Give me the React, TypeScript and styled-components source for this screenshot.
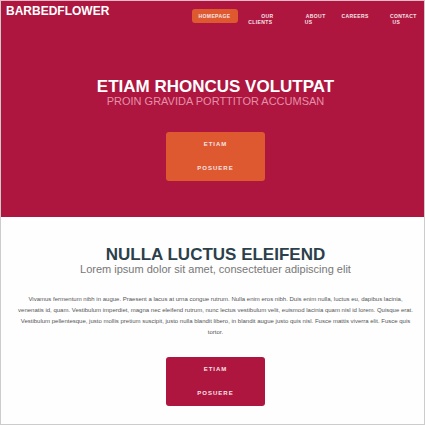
import React from "react";
import styled, { createGlobalStyle } from "styled-components";

const crimson = "#ae163f";
const orange = "#de592f";

const GlobalStyle = createGlobalStyle`
  * { box-sizing: border-box; }
  body {
    margin: 0;
    background: #fefefe;
    color: #555;
    font-family: "Liberation Sans", Arial, Helvetica, sans-serif;
  }
`;

const Page = styled.div`
  display: flex;
  flex-direction: column;
  min-height: 100vh;
  border: 1px solid #ccc;
  border-top-color: #f0b9c8;
`;

const Hero = styled.div`
  padding-bottom: 36px;
  background: ${crimson};
`;

const Header = styled.header`
  display: flex;
  justify-content: space-between;
  align-items: flex-start;
  height: 77px;
`;

const Logo = styled.a`
  padding: 3px 0 0 5px;
  color: #fff;
  font-size: 12px;
  line-height: 15px;
  font-weight: 700;
  text-decoration: none;
`;

const Nav = styled.nav`
  width: 55%;
`;

const Menu = styled.ul`
  display: grid;
  grid-template-columns: 46fr 52fr 44fr 41fr 48fr;
  justify-items: center;
  margin: 0;
  padding: 12px 0 0;
  list-style: none;
`;

const MenuItem = styled.li`
  width: min-content;
  text-align: center;
  font-size: 5px;
  line-height: 6px;
`;

const MenuLink = styled.a<{ $active?: boolean }>`
  padding: 4px 7px;
  border-radius: 3px;
  background: ${(p) => (p.$active ? orange : "transparent")};
  color: #f8e4e8;
  font-weight: 700;
  letter-spacing: 0.08em;
  text-decoration: none;
`;

const Intro = styled.section`
  display: flex;
  flex-direction: column;
  align-items: center;
  padding-left: 6px;
  text-align: center;
`;

const Title = styled.h2<{ $light?: boolean }>`
  margin: 0;
  color: ${(p) => (p.$light ? "#fff" : "#2b404a")};
  font-size: 17px;
  line-height: 18px;
  font-weight: 700;
`;

const Byline = styled.p<{ $light?: boolean }>`
  margin: 0 0 ${(p) => (p.$light ? "26px" : "20px")};
  color: ${(p) => (p.$light ? "#e58fa8" : "#777")};
  font-size: 11px;
  line-height: 10px;
`;

const Button = styled.a<{ $tone: string }>`
  width: min-content;
  padding: 0 31px 1px;
  border-radius: 3px;
  background: ${(p) => p.$tone};
  color: #f8e4e8;
  font-size: 6px;
  line-height: 24px;
  font-weight: 700;
  letter-spacing: 1px;
  text-decoration: none;
`;

const Welcome = styled(Intro)`
  padding-top: 29px;
  padding-bottom: 18px;
`;

const Copy = styled.p`
  margin: 0 0 19px;
  padding: 0 9px;
  color: #555;
  font-size: 6px;
  line-height: 11px;
`;

const links = ["HOMEPAGE", "OUR CLIENTS", "ABOUT US", "CAREERS", "CONTACT US"];

export default function App() {
  return (
    <Page>
      <GlobalStyle />
      <Hero>
        <Header>
          <Logo href="#">BARBEDFLOWER</Logo>
          <Nav>
            <Menu>
              {links.map((label, i) => (
                <MenuItem key={label}>
                  <MenuLink href="#" $active={i === 0}>
                    {label}
                  </MenuLink>
                </MenuItem>
              ))}
            </Menu>
          </Nav>
        </Header>
        <Intro>
          <Title as="h1" $light>ETIAM RHONCUS VOLUTPAT</Title>
          <Byline $light>PROIN GRAVIDA PORTTITOR ACCUMSAN</Byline>
          <Button href="#" $tone={orange}>ETIAM POSUERE</Button>
        </Intro>
      </Hero>
      <Welcome>
        <Title>NULLA LUCTUS ELEIFEND</Title>
        <Byline>Lorem ipsum dolor sit amet, consectetuer adipiscing elit</Byline>
        <Copy>
          Vivamus fermentum nibh in augue. Praesent a lacus at urna congue rutrum. Nulla enim eros
          nibh. Duis enim nulla, luctus eu, dapibus lacinia, venenatis id, quam. Vestibulum
          imperdiet, magna nec eleifend rutrum, nunc lectus vestibulum velit, euismod lacinia quam
          nisl id lorem. Quisque erat. Vestibulum pellentesque, justo mollis pretium suscipit, justo
          nulla blandit libero, in blandit augue justo quis nisl. Fusce mattis viverra elit. Fusce
          quis tortor.
        </Copy>
        <Button href="#" $tone={crimson}>ETIAM POSUERE</Button>
      </Welcome>
    </Page>
  );
}
